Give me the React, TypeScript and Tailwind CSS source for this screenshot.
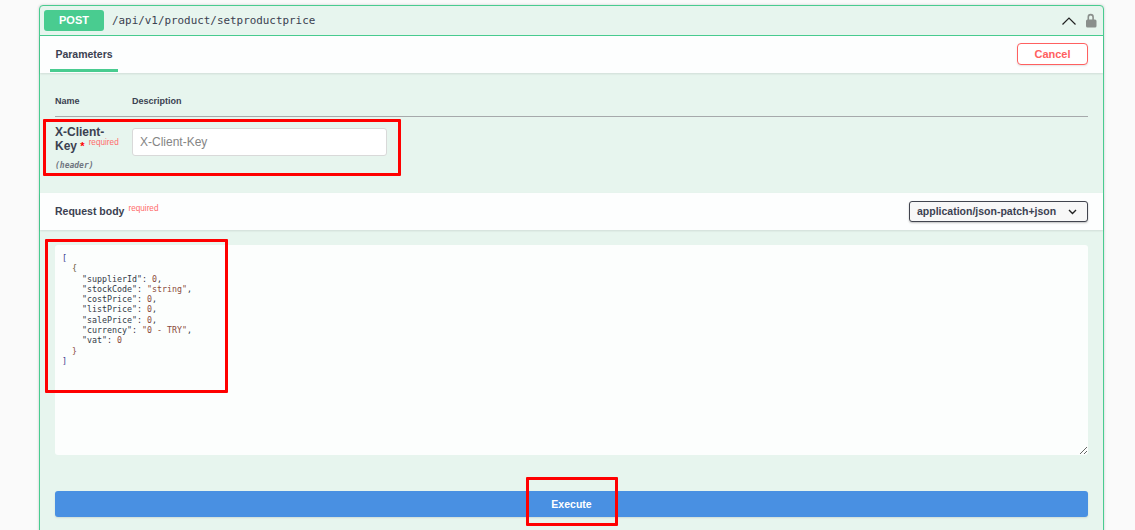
import React from 'react';

const sans = "font-['Liberation_Sans',Arial,sans-serif]";
const mono = "font-['DejaVu_Sans_Mono',monospace]";

// Coloured tokens of the example request body
const K = ({ children }: { children: React.ReactNode }) => <span className="text-[#333a47]">{children}</span>;
const V = ({ children }: { children: React.ReactNode }) => <span className="text-[#8a4a3a]">{children}</span>;

const bodyRows: [string, string, string][] = [
  ['"supplierId"', '0', ','],
  ['"stockCode"', '"string"', ','],
  ['"costPrice"', '0', ','],
  ['"listPrice"', '0', ','],
  ['"salePrice"', '0', ','],
  ['"currency"', '"0 - TRY"', ','],
  ['"vat"', '0', ''],
];

const RedBox = ({ className }: { className: string }) => (
  <div className={`absolute border-[3px] border-[#ff0000] rounded-[1px] pointer-events-none ${className}`} />
);

export default function App() {
  return (
    <div className={`relative h-[530px] overflow-hidden bg-[#fafafa] pl-[39px] pt-[5px] ${sans}`}>
      <div className="w-[1065px] h-[600px] border border-[#49cc90] rounded-[4px] bg-[#e7f5ee] shadow-[0_0_3px_rgba(0,0,0,0.19)]">
        {/* Operation header */}
        <div className="flex items-center h-[29px] border-b border-[#49cc90] box-content pl-[4px] pr-[6px]">
          <span className="flex items-center justify-center w-[60px] h-[21px] rounded-[3px] bg-[#49cc90] text-white text-[11px] font-bold">
            POST
          </span>
          <span className={`ml-[8px] mt-[2px] text-[10.9px] text-[#3b4151] ${mono}`}>/api/v1/product/setproductprice</span>
          <svg className="ml-auto" width="14" height="8" viewBox="0 0 14 8" fill="none" stroke="#222" strokeWidth="1.2">
            <path d="M0.5 7.5 L7 1 L13.5 7.5" />
          </svg>
          <svg className="ml-[9px] mb-[1px]" width="12" height="15" viewBox="0 0 12 15" fill="#8a8f8c">
            <path d="M2.5 7V4a3.2 3.2 0 0 1 6.4 0v3H7.3V4a1.6 1.6 0 0 0-3.2 0v3z" />
            <rect x="1" y="6.5" width="10.5" height="8" rx="1.5" />
          </svg>
        </div>

        {/* Tabs */}
        <div className="flex justify-between h-[37px] pl-[10px] pr-[15px] bg-[#fdfefe] shadow-[0_1px_2px_rgba(0,0,0,0.1)]">
          <div className="flex items-center justify-center w-[68px] h-[36px] pt-[4px] border-b-[3px] border-[#49cc90] text-[10.5px] font-bold text-[#3b4151]">
            Parameters
          </div>
          <button className="mt-[7px] w-[71px] h-[22px] rounded-[4px] border border-[#ff6060] bg-white text-[11px] font-bold text-[#ff6060] shadow-[0_1px_2px_rgba(0,0,0,0.1)]">
            Cancel
          </button>
        </div>

        {/* Parameters table */}
        <div className="px-[15px]">
          <div className="flex items-end h-[44px] pb-[8px] border-b border-[#a6a9ab] text-[9px] font-bold text-[#3b4151]">
            <span className="w-[77px]">Name</span>
            <span>Description</span>
          </div>
          <div className="flex h-[76px]">
            <div className="w-[77px] pt-[8px]">
              <div className="text-[12px] leading-[14px] font-bold text-[#3b4151]">
                X-Client-
                <br />
                Key <span className="text-[#ff0000] text-[11px]">*</span>
                <span className="relative top-[-5px] ml-[4px] text-[8.2px] font-normal text-[#ff6b6b]">required</span>
              </div>
              <div className={`mt-[5px] text-[8px] italic font-bold text-[#6f7580] ${mono}`}>(header)</div>
            </div>
            <input
              placeholder="X-Client-Key"
              className={`mt-[11px] w-[255px] h-[28px] px-[7px] rounded-[3px] border border-[#d9d9d9] bg-white text-[12px] outline-none placeholder:text-[#858585] ${sans}`}
            />
          </div>
        </div>

        {/* Request body */}
        <div className="flex items-center justify-between h-[37px] pl-[15px] pr-[15px] bg-[#fdfefe] shadow-[0_1px_2px_rgba(0,0,0,0.1)]">
          <div className="text-[10.5px] font-bold text-[#3b4151]">
            Request body
            <span className="relative top-[-4px] ml-[4px] text-[8.2px] font-normal text-[#ff6b6b]">required</span>
          </div>
          <div className="flex items-center justify-between w-[179px] h-[21px] pl-[7px] pr-[10px] rounded-[3px] border border-[#41444e] bg-[#f7f7f7] shadow-[0_1px_2px_rgba(0,0,0,0.25)] text-[10.5px] font-bold text-[#3b4151]">
            application/json-patch+json
            <svg width="9" height="6" viewBox="0 0 9 6" fill="none" stroke="#222" strokeWidth="1.4">
              <path d="M1 1 L4.5 4.5 L8 1" />
            </svg>
          </div>
        </div>

        <div className="px-[15px] pt-[15px]">
          <div
            className={`h-[210px] pl-[7px] pt-[8px] rounded-[3px] bg-[#fcfefd] resize-y overflow-auto text-[8.3px] leading-[10.3px] whitespace-pre ${mono}`}
          >
            <div className="text-[#3b3b8f]">[</div>
            <div className="text-[#6a5a3a]">{'  {'}</div>
            {bodyRows.map(([key, value, comma]) => (
              <div key={key}>
                {'    '}
                <K>{key}</K>
                <K>: </K>
                <V>{value}</V>
                <K>{comma}</K>
              </div>
            ))}
            <div className="text-[#8a4a3a]">{'  }'}</div>
            <div className="text-[#3b3b8f]">]</div>
          </div>
          <button className="block mt-[36px] w-full h-[26px] pt-[2px] rounded-[3px] bg-[#4990e2] text-white text-[10.5px] font-bold shadow-[0_1px_2px_rgba(0,0,0,0.1)]">
            Execute
          </button>
        </div>
      </div>

      {/* Red annotation boxes laid over the screenshot */}
      <RedBox className="left-[43px] top-[119px] w-[358px] h-[57px]" />
      <RedBox className="left-[45px] top-[239px] w-[183px] h-[154px]" />
      <RedBox className="left-[526px] top-[477px] w-[92px] h-[49px]" />
    </div>
  );
}
